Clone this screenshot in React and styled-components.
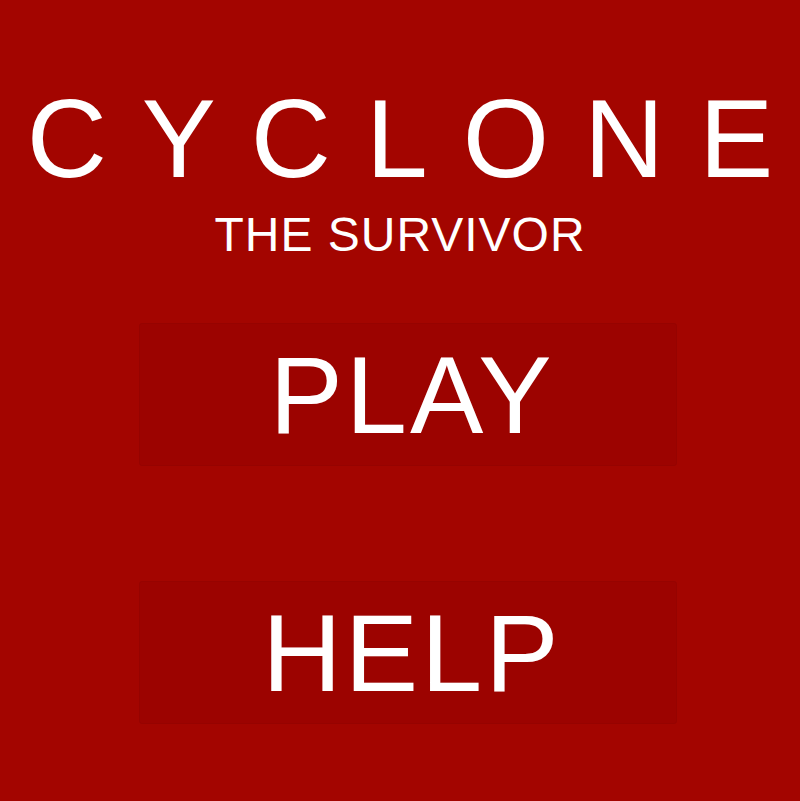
import styled, { createGlobalStyle } from 'styled-components';

const GlobalStyle = createGlobalStyle`
  html, body {
    margin: 0;
    padding: 0;
    background: #a30500;
  }
  body {
    font-family: "Liberation Sans", Arial, sans-serif;
    color: #fff;
  }
`;

const Screen = styled.div`
  width: 800px;
  height: 801px;
  background: #a30500;
  display: flex;
  flex-direction: column;
  align-items: center;
  padding-top: 84px;
  box-sizing: border-box;
  overflow: hidden;
`;

const Title = styled.h1`
  margin: 0;
  font-size: 111px;
  font-weight: 400;
  line-height: 1;
  letter-spacing: 35px;
  white-space: nowrap;
`;

const LastLetter = styled.span`
  letter-spacing: 0;
`;

const Subtitle = styled.h2`
  margin: 16px 0 0;
  font-size: 48px;
  font-weight: 400;
  line-height: 1;
  letter-spacing: 1px;
  white-space: nowrap;
`;

const Menu = styled.nav`
  display: flex;
  flex-direction: column;
  gap: 115px;
  margin: 64px 0 0 16px;
`;

const MenuButton = styled.button`
  width: 538px;
  height: 143px;
  display: flex;
  align-items: center;
  justify-content: center;
  background: #9c0300;
  border: 1px solid #960300;
  border-radius: 3px;
  box-sizing: border-box;
  color: #fff;
  font-family: "Liberation Sans", Arial, sans-serif;
  font-size: 110px;
  line-height: 1;
  letter-spacing: 3px;
  padding: 0 0 0 8px;
  cursor: pointer;
`;

const App = () => {
  return (
    <>
      <GlobalStyle />
      <Screen>
        <Title>
          CYCLON<LastLetter>E</LastLetter>
        </Title>
        <Subtitle>THE SURVIVOR</Subtitle>
        <Menu>
          <MenuButton>PLAY</MenuButton>
          <MenuButton>HELP</MenuButton>
        </Menu>
      </Screen>
    </>
  );
};

export default App;
